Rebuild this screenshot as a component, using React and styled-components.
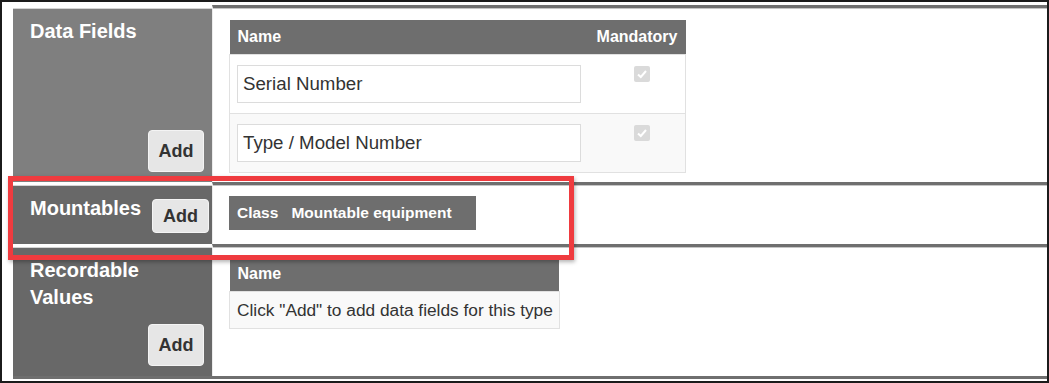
import React from 'react';
import styled, { createGlobalStyle } from 'styled-components';

const GlobalStyle = createGlobalStyle`
  html, body {
    margin: 0;
    padding: 0;
    background: #fff;
  }
  body {
    font-family: "Liberation Sans", Arial, sans-serif;
    color: #333;
  }
`;

const Frame = styled.div`
  position: relative;
  box-sizing: border-box;
  width: 1049px;
  height: 383px;
  border: 2px solid #1b1b1b;
  padding: 3px 0 2px 11px;
  background: #fff;
  overflow: hidden;
`;

const Sections = styled.div`
  display: flex;
  flex-direction: column;
  border-bottom: 3px solid #6f6f6f;
`;

const Section = styled.section`
  display: flex;
  box-sizing: border-box;
  height: ${(p) => p.h}px;
`;

const Side = styled.div`
  box-sizing: border-box;
  width: 199px;
  flex-shrink: 0;
  display: flex;
  flex-direction: ${(p) => (p.inline ? 'row' : 'column')};
  align-items: ${(p) => (p.inline ? 'flex-start' : 'stretch')};
  gap: 7px;
  padding: ${(p) => (p.inline ? '10px 3px 0 17px' : '10px 8px 10px 17px')};
  background: ${(p) => p.bg};
  border-top: 3px solid #fff;
  box-shadow: inset 0 1px 0 #d4d4d4;
`;

const SideTitle = styled.h3`
  margin: 0;
  font-size: 20px;
  line-height: 27px;
  font-weight: 700;
  color: #fff;
  white-space: nowrap;
`;

const AddButton = styled.button`
  box-sizing: border-box;
  font-family: "Liberation Sans", Arial, sans-serif;
  font-size: 18px;
  font-weight: 700;
  color: #333;
  background: #e6e6e6;
  border: 1px solid #f4f4f4;
  border-radius: 4px;
  width: ${(p) => (p.compact ? 57 : 56)}px;
  height: ${(p) => (p.compact ? 34 : 42)}px;
  margin-top: ${(p) => (p.compact ? '4px' : 'auto')};
  margin-left: auto;
  align-self: ${(p) => (p.compact ? 'flex-start' : 'flex-end')};
  padding: 0;
  cursor: pointer;
`;

const Main = styled.div`
  flex: 1;
  box-sizing: border-box;
  padding: ${(p) => p.top}px 16px 0 16px;
  border-top: 3px solid #6f6f6f;
  border-left: 1px solid #ececec;
  box-shadow: inset 0 1px 0 #c6c6c6;
`;

const Table = styled.table`
  border-collapse: collapse;
  width: ${(p) => (p.w ? `${p.w}px` : 'auto')};
  font-size: 16px;
`;

const Th = styled.th`
  background: #6e6e6e;
  color: #fff;
  font-weight: 700;
  font-size: ${(p) => p.size || 16}px;
  text-align: ${(p) => p.align || 'left'};
  padding: ${(p) => p.pad || '8px'};
  width: ${(p) => (p.w ? `${p.w}px` : 'auto')};
  line-height: 18px;
  white-space: nowrap;
`;

const Tr = styled.tr`
  background: ${(p) => (p.striped ? '#f9f9f9' : '#fff')};
`;

const Td = styled.td`
  border: 1px solid #e1e1e1;
  border-left: ${(p) => (p.inner ? 'none' : '1px solid #e1e1e1')};
  border-right: ${(p) => (p.innerRight ? 'none' : '1px solid #e1e1e1')};
  padding: ${(p) => p.pad || '10px 8px'};
  vertical-align: top;
  text-align: ${(p) => p.align || 'left'};
  font-size: ${(p) => p.size || 16}px;
  line-height: 18px;
  color: #333;
  white-space: nowrap;
`;

const TextInput = styled.input`
  box-sizing: border-box;
  display: block;
  width: 100%;
  height: 38px;
  border: 1px solid #dcdcdc;
  padding: 0 5px;
  font-family: "Liberation Sans", Arial, sans-serif;
  font-size: 18.7px;
  color: #333;
  background: #fff;
  outline: none;
`;

const CheckBox = styled.span`
  display: inline-flex;
  align-items: center;
  justify-content: center;
  width: 16px;
  height: 16px;
  margin: 1px 0 0 10px;
  border-radius: 2px;
  background: #dadada;
`;

const RedBox = styled.div`
  position: absolute;
  left: 6px;
  top: 174px;
  width: 566px;
  height: 84px;
  box-sizing: border-box;
  border: 5px solid #ef3b3f;
  box-shadow: 1px 2px 4px rgba(0, 0, 0, 0.3);
  pointer-events: none;
`;

const Check = () => (
  <CheckBox>
    <svg width="12" height="12" viewBox="0 0 12 12">
      <path d="M2 6.4 L4.8 9 L10 3" fill="none" stroke="#fff" strokeWidth="2" />
    </svg>
  </CheckBox>
);

const fields = ['Serial Number', 'Type / Model Number'];

export default function App() {
  return (
    <>
      <GlobalStyle />
      <Frame>
        <Sections>
          <Section h={177}>
            <Side bg="#7f7f7f">
              <SideTitle>Data Fields</SideTitle>
              <AddButton>Add</AddButton>
            </Side>
            <Main top={12}>
              <Table w={457}>
                <thead>
                  <tr>
                    <Th w={343}>Name</Th>
                    <Th align="right">Mandatory</Th>
                  </tr>
                </thead>
                <tbody>
                  {fields.map((f, i) => (
                    <Tr key={f} striped={i % 2 === 1}>
                      <Td innerRight pad="10px 8px 10px 7px">
                        <TextInput defaultValue={f} />
                      </Td>
                      <Td inner align="center">
                        <Check />
                      </Td>
                    </Tr>
                  ))}
                </tbody>
              </Table>
            </Main>
          </Section>

          <Section h={62}>
            <Side bg="#686868" inline>
              <SideTitle>Mountables</SideTitle>
              <AddButton compact>Add</AddButton>
            </Side>
            <Main top={11}>
              <Table>
                <thead>
                  <tr>
                    <Th size={15.5} pad="8px 6px 8px 8px">Class</Th>
                    <Th size={15.5} pad="8px 24px 8px 7px">Mountable equipment</Th>
                  </tr>
                </thead>
              </Table>
            </Main>
          </Section>

          <Section h={132}>
            <Side bg="#686868">
              <SideTitle>
                Recordable
                <br />
                Values
              </SideTitle>
              <AddButton>Add</AddButton>
            </Side>
            <Main top={10}>
              <Table>
                <thead>
                  <tr>
                    <Th>Name</Th>
                  </tr>
                </thead>
                <tbody>
                  <Tr striped>
                    <Td size={17.3} pad="9px 6px 9px 7px">
                      Click "Add" to add data fields for this type
                    </Td>
                  </Tr>
                </tbody>
              </Table>
            </Main>
          </Section>
        </Sections>
        <RedBox />
      </Frame>
    </>
  );
}
